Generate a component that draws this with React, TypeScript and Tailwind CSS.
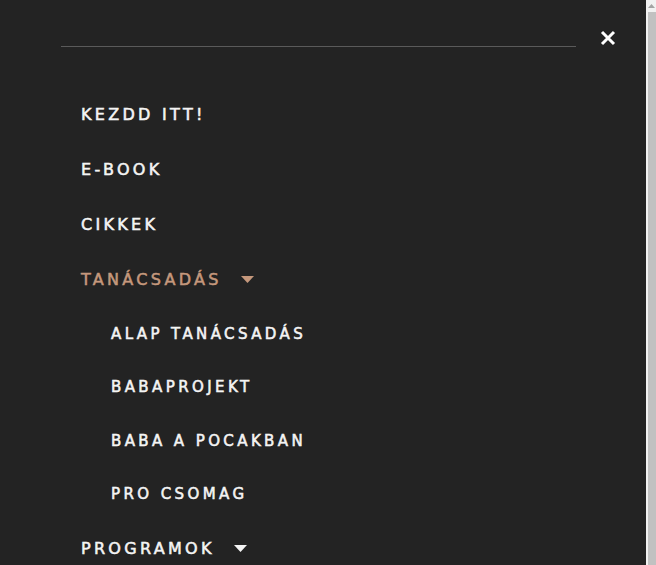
import React from "react";

const Caret = ({ color }: { color: string }) => (
  <svg width="13" height="7" viewBox="0 0 13 7" className="ml-[19px] shrink-0">
    <path d="M0 0 H13 L6.5 7 Z" fill={color} />
  </svg>
);

const mainCls =
  "h-[55px] flex items-center text-[16px] font-normal tracking-[3.3px] uppercase [-webkit-text-stroke:0.55px_currentColor]";
const subCls =
  "h-[53.5px] flex items-center pl-[30px] text-[15px] font-normal tracking-[3.4px] uppercase text-[#f4f4f4] [-webkit-text-stroke:0.55px_currentColor]";

export default function App() {
  return (
    <div
      className="h-[565px] w-full flex overflow-hidden"
      style={{ fontFamily: '"DejaVu Sans", sans-serif' }}
    >
      <div className="flex-1 bg-[#232323] flex flex-col">
        <div className="flex pl-[61px] pt-[30px]">
          <div className="w-[515px] h-px mt-[16px] bg-[#5a5a5a]" />
          <svg width="16" height="16" viewBox="0 0 16 16" className="ml-[24px]">
            <path d="M2 2 L14 14 M14 2 L2 14" stroke="#ffffff" strokeWidth="3" strokeLinecap="butt" />
          </svg>
        </div>
        <nav className="mt-[40px] pl-[81px] flex flex-col">
          <div className={`${mainCls} text-[#f4f4f4]`}>Kezdd itt!</div>
          <div className={`${mainCls} text-[#f4f4f4]`}>E-book</div>
          <div className={`${mainCls} text-[#f4f4f4]`}>Cikkek</div>
          <div className={`${mainCls} text-[#c5987c]`}>
            Tanácsadás
            <Caret color="#c5987c" />
          </div>
          <div className={subCls}>Alap tanácsadás</div>
          <div className={subCls}>Babaprojekt</div>
          <div className={subCls}>Baba a pocakban</div>
          <div className={subCls}>Pro csomag</div>
          <div className={`${mainCls} text-[#f4f4f4]`}>
            Programok
            <Caret color="#f4f4f4" />
          </div>
        </nav>
      </div>
      <div className="w-[10px] bg-[#f1f1f1] flex flex-col">
        <div className="h-[12px] flex items-center justify-end pr-[1px]">
          <svg width="7" height="4" viewBox="0 0 7 4">
            <path d="M3.5 0 L7 4 H0 Z" fill="#a3a3a3" />
          </svg>
        </div>
        <div className="flex-1 ml-[2px] bg-[#c1c1c1]" />
      </div>
    </div>
  );
}
